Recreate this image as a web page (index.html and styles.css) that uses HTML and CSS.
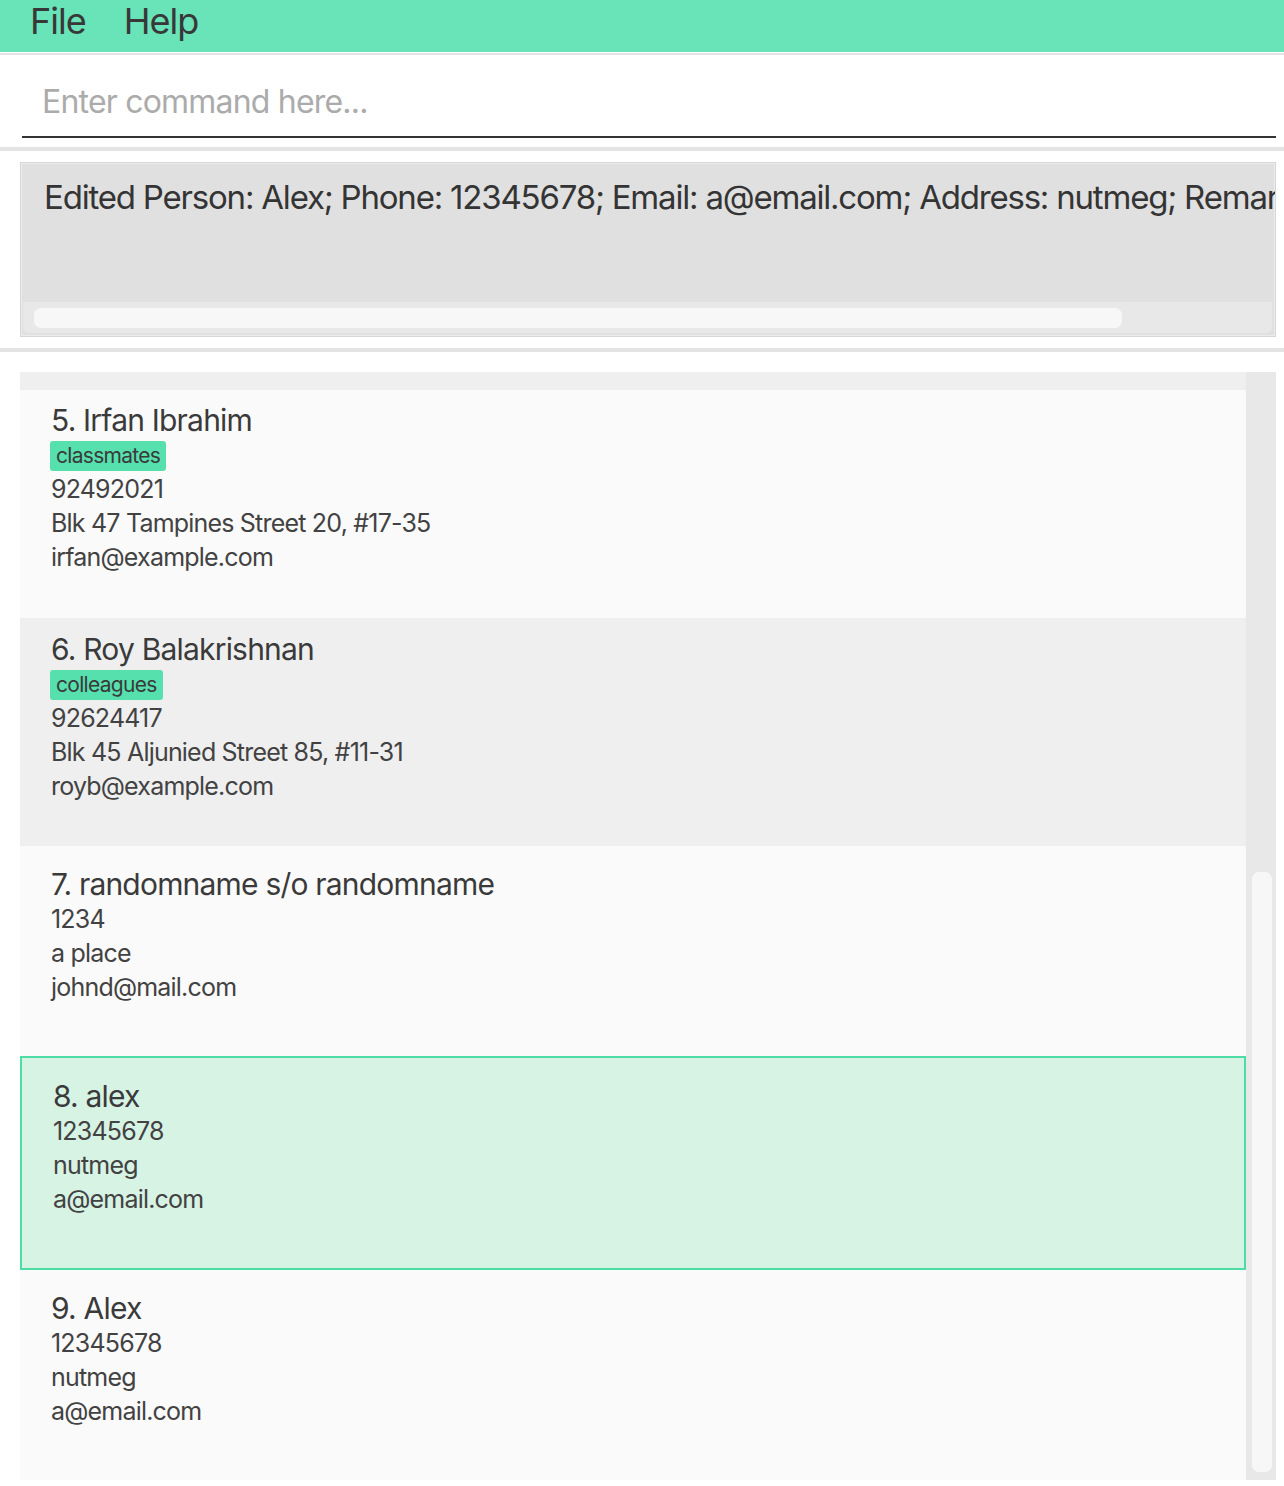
FILE: index.html
```html
<!DOCTYPE html>
<html>
<head>
<meta charset="utf-8">
<link rel="stylesheet" href="styles.css">
</head>
<body>
<div class="menubar"><span class="menu">File</span><span class="menu">Help</span></div>
<div class="menusep"></div>
<div class="command">
  <div class="cmd-input">Enter command here...</div>
</div>
<div class="band"></div>
<div class="result-area">
  <div class="result">
    <div class="result-text">Edited Person: Alex; Phone: 12345678; Email: a@email.com; Address: nutmeg; Remark: </div>
    <div class="hscroll"><div class="hthumb"></div></div>
  </div>
</div>
<div class="band"></div>
<div class="list-area">
  <div class="list">
    <div class="cards">
      <div class="card-tail"></div>
      <div class="card light tagged">
        <div class="name">5. Irfan Ibrahim</div>
        <div class="tags"><span class="tag">classmates</span></div>
        <div class="line">92492021</div>
        <div class="line">Blk 47 Tampines Street 20, #17-35</div>
        <div class="line">irfan@example.com</div>
      </div>
      <div class="card dark tagged">
        <div class="name">6. Roy Balakrishnan</div>
        <div class="tags"><span class="tag">colleagues</span></div>
        <div class="line">92624417</div>
        <div class="line">Blk 45 Aljunied Street 85, #11-31</div>
        <div class="line">royb@example.com</div>
      </div>
      <div class="card light">
        <div class="name">7. randomname s/o randomname</div>
        <div class="line">1234</div>
        <div class="line">a place</div>
        <div class="line">johnd@mail.com</div>
      </div>
      <div class="card selected">
        <div class="name">8. alex</div>
        <div class="line">12345678</div>
        <div class="line">nutmeg</div>
        <div class="line">a@email.com</div>
      </div>
      <div class="card light">
        <div class="name">9. Alex</div>
        <div class="line">12345678</div>
        <div class="line">nutmeg</div>
        <div class="line">a@email.com</div>
      </div>
    </div>
    <div class="vscroll"><div class="vthumb"></div></div>
  </div>
</div>
</body>
</html>
```

FILE: styles.css
```css
* { box-sizing: border-box; }
html, body {
  margin: 0;
  padding: 0;
  background: #ffffff;
  font-family: Inter, "Noto Sans", "Liberation Sans", sans-serif;
  color: #3c3c3c;
}
.menubar {
  height: 52px;
  background: #68e4b8;
  display: flex;
  align-items: center;
  padding-left: 30px;
  gap: 38px;
}
.menu {
  font-size: 36px;
  line-height: 40px;
  color: #383838;
  margin-top: -11px;
  letter-spacing: -1px;
}
.menusep {
  height: 3px;
  border-top: 1px solid #ffffff;
  background: #e4e4e8;
}
.command {
  padding: 27px 8px 9px 22px;
}
.cmd-input {
  font-size: 32px;
  line-height: 40px;
  color: #ababab;
  padding: 0 0 14px 20px;
  border-bottom: 2px solid #333333;
  letter-spacing: -0.8px;
}
.band {
  height: 4px;
  background: #e4e4e4;
}
.result-area {
  padding: 11px 8px 11px 20px;
}
.result {
  height: 175px;
  background: #e0e0e0;
  border: 1px solid #d6d6d6;
  box-shadow: inset 0 0 0 1px #ececec;
  display: flex;
  flex-direction: column;
  overflow: hidden;
}
.result-text {
  flex: 1;
  white-space: nowrap;
  overflow: hidden;
  font-size: 33px;
  line-height: 44px;
  padding: 12px 0 0 23px;
  color: #343434;
  letter-spacing: -1.2px;
}
.hscroll {
  height: 31px;
  margin: 0 3px 3px 2px;
  background: #e8e8e8;
  border-radius: 0 0 6px 6px;
  padding: 6px 0 5px 11px;
}
.hthumb {
  width: 1088px;
  height: 20px;
  background: #f7f7f7;
  border-radius: 7px;
}
.list-area {
  padding: 20px 8px 6px 20px;
}
.list {
  display: flex;
  background: #efefef;
  height: 1108px;
}
.cards {
  flex: 1;
  display: flex;
  flex-direction: column;
}
.card-tail {
  height: 18px;
  background: #efefef;
}
.card {
  height: 210px;
  padding: 20px 0 0 31px;
}
.card.tagged {
  height: 228px;
  padding-top: 12px;
}
.card.dark { background: #efefef; padding-top: 13px; }
.card.light { background: #fafafa; }
.card.selected {
  height: 214px;
  background: #d7f3e4;
  border: 2px solid #4ddba6;
  padding: 20px 0 0 31px;
}
.name {
  font-size: 30px;
  line-height: 36px;
  color: #3a3a3a;
  letter-spacing: -0.8px;
}
.tags {
  display: flex;
  margin-top: 3px;
  margin-left: -1px;
  height: 31px;
}
.tag {
  background: #55e0ae;
  border-radius: 3px;
  height: 30px;
  font-size: 21px;
  line-height: 30px;
  padding: 0 6px;
  color: #3a3a3a;
  letter-spacing: -0.7px;
}
.line {
  font-size: 25px;
  line-height: 34px;
  color: #424242;
  letter-spacing: -0.8px;
}
.vscroll {
  width: 30px;
  background: #e8e8e8;
  padding: 500px 4px 0 6px;
}
.vthumb {
  height: 600px;
  background: #f7f7f7;
  border-radius: 7px;
}
```
